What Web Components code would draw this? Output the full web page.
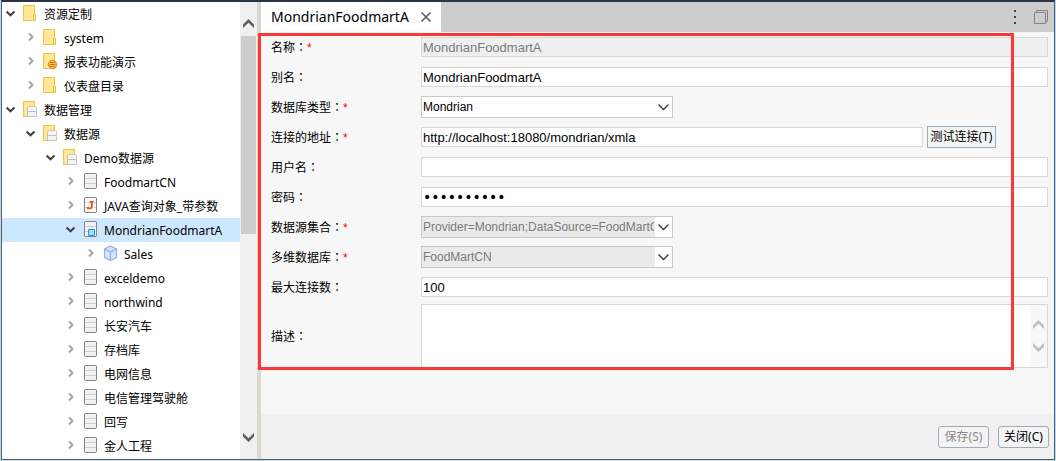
<!DOCTYPE html>
<html lang="zh-CN">
<head>
<meta charset="utf-8">
<title>MondrianFoodmartA</title>
<style>
  html { height: 100%; }
  body {
    margin: 0; height: 100%; box-sizing: border-box; padding: 0 1px 1px;
    background: #c3d7e0; color: #000;
    font: 12px/24px "Noto Sans", "Noto Sans CJK SC", sans-serif;
  }
</style>
</head>
<body>
<app-window>
  <tree-view slot="nav">
    <tree-item level="0" icon="folder" open>资源定制</tree-item>
    <tree-item level="1" icon="folder">system</tree-item>
    <tree-item level="1" icon="report">报表功能演示</tree-item>
    <tree-item level="1" icon="folder">仪表盘目录</tree-item>
    <tree-item level="0" icon="dbfolder" open>数据管理</tree-item>
    <tree-item level="1" icon="dbfolder" open>数据源</tree-item>
    <tree-item level="2" icon="dbfolder" open>Demo数据源</tree-item>
    <tree-item level="3" icon="db">FoodmartCN</tree-item>
    <tree-item level="3" icon="java">JAVA查询对象_带参数</tree-item>
    <tree-item level="3" icon="olap" open selected>MondrianFoodmartA</tree-item>
    <tree-item level="4" icon="cube">Sales</tree-item>
    <tree-item level="3" icon="db">exceldemo</tree-item>
    <tree-item level="3" icon="db">northwind</tree-item>
    <tree-item level="3" icon="db">长安汽车</tree-item>
    <tree-item level="3" icon="db">存档库</tree-item>
    <tree-item level="3" icon="db">电网信息</tree-item>
    <tree-item level="3" icon="db">电信管理驾驶舱</tree-item>
    <tree-item level="3" icon="db">回写</tree-item>
    <tree-item level="3" icon="db">金人工程</tree-item>
  </tree-view>
  <tab-bar slot="tabs">MondrianFoodmartA</tab-bar>
  <source-form slot="main">
    <form-field label="名称" required disabled value="MondrianFoodmartA"></form-field>
    <form-field label="别名" value="MondrianFoodmartA"></form-field>
    <form-field label="数据库类型" required kind="select" value="Mondrian"></form-field>
    <form-field label="连接的地址" required value="http://localhost:18080/mondrian/xmla" class="short"><ui-button square>测试连接(T)</ui-button></form-field>
    <form-field label="用户名" value=""></form-field>
    <form-field label="密码" kind="password" value="mondrian18"></form-field>
    <form-field label="数据源集合" required disabled kind="select" value="Provider=Mondrian;DataSource=FoodMartCN"></form-field>
    <form-field label="多维数据库" required disabled kind="select" value="FoodMartCN"></form-field>
    <form-field label="最大连接数" value="100"></form-field>
    <form-field label="描述" kind="textarea" value=""></form-field>
  </source-form>
  <action-bar slot="actions">
    <ui-button disabled>保存(S)</ui-button>
    <ui-button>关闭(C)</ui-button>
  </action-bar>
</app-window>

<script>
class Base extends HTMLElement {
  connectedCallback() {
    if (this.shadowRoot) return;
    this.attachShadow({ mode: 'open' }).innerHTML = this.render();
  }
}

customElements.define('app-window', class extends Base {
  render() {
    return `<style>
      :host { display: grid; grid-template-columns: 259px minmax(0, 1fr); height: 100%; box-sizing: border-box;
        border: solid #53616f; border-width: 2px 1px 1px; border-top-color: #2a3549; border-right-color: #4a5d80; overflow: hidden; }
      nav { min-height: 0; border-right: 4px solid #dbd8d1; overflow: hidden; }
      section { display: flex; flex-direction: column; min-height: 0; background: #f7f7f7; }
      main { flex: 1; min-height: 0; }
    </style>
    <nav><slot name="nav"></slot></nav>
    <section><slot name="tabs"></slot><main><slot name="main"></slot></main><slot name="actions"></slot></section>`;
  }
});

customElements.define('tree-view', class extends Base {
  render() {
    return `<style>
      :host { display: grid; grid-template-columns: minmax(0, 1fr) 17px; height: 100%; background: #fff; }
      .items { min-height: 0; overflow: hidden; }
      .bar { display: flex; flex-direction: column; background: #f0f0f0; }
      button { box-sizing: border-box; border: 0; padding: 8px 0; background: none; height: 34px; display: flex; justify-content: center; align-items: flex-start; }
      .up { align-items: flex-end; }
      .track { flex: 1; padding: 0 1px; }
      .thumb { height: 51%; background: #cdcdcd; }
      svg { display: block; fill: #606060; }
    </style>
    <div class="items" role="tree"><slot></slot></div>
    <div class="bar">
      <button class="up" aria-label="向上滚动"><svg width="11" height="9" viewBox="0 0 11 9"><path d="M5.500 0L11 5.500V9L5.500 3.800 0 9V5.500z"/></svg></button>
      <div class="track"><div class="thumb"></div></div>
      <button aria-label="向下滚动"><svg width="11" height="9" viewBox="0 0 11 9"><path d="M5.500 9L11 3.500V0L5.500 5.200 0 0V3.500z"/></svg></button>
    </div>`;
  }
});

const folder = `<path fill="#ffe795" stroke="#e8c548" d="M.5.500H11.500V9.500H12.500V15.500H.5z"/><path fill="#ffe795" stroke="#e8c548" d="M10.500 9.500h2v5.500h-2z"/>`;
const cabinet = `<path fill="#f2f2f2" stroke="#858585" d="M2 .500H13L13.500 1V15L13 15.500H2L1.500 15V1z"/><path stroke="#cfcfcf" d="M2 5.500h11M2 10.500h11"/>`;
const ICONS = {
  folder,
  report: folder + `<circle cx="9.500" cy="11.500" r="4.200" fill="#fbbd5c" stroke="#e08a1e"/><path stroke="#d07c16" d="M7 9.500h5M6.500 11.500h6M7 13.500h5"/>`,
  dbfolder: `<path fill="#ffe795" stroke="#e8c548" d="M.5.500H11.500V15.500H.5z"/><path fill="#f4f4f4" stroke="#c4c4c4" d="M6 5.500H12.500L13.500 6.500V15.500H4.500V7z"/><path stroke="#c4c4c4" d="M5 10.500h8"/>`,
  db: cabinet,
  java: `<path fill="#fafafa" stroke="#858585" d="M2 .500H13L13.500 1V15L13 15.500H2L1.500 15V1z"/><path stroke="#cfcfcf" d="M2 5.500h2M11 5.500H13M2 10.500h2M11 10.500H13"/><path fill="none" stroke="#e8590c" stroke-width="1.800" d="M6.500 5h4M8.900 5v4.500Q8.900 11.300 7 11.300H5V9.800"/>`,
  olap: cabinet + `<path fill="#a5dcfb" stroke="#1c9ceb" d="M5.500 8.500h6v6h-6z"/>`,
  cube: `<path fill="#d5e3f8" stroke="#8bb0ea" stroke-width="1.200" d="M7.500 1L13.500 4V12.500L7.500 15.500 1.500 12.500V4z"/><path fill="none" stroke="#8bb0ea" stroke-width="1.200" d="M1.500 4L7.500 7 13.500 4M7.500 7V15"/>`
};

customElements.define('tree-item', class extends Base {
  render() {
    const open = this.hasAttribute('open');
    this.setAttribute('role', 'treeitem');
    return `<style>
      :host { display: flex; align-items: center; gap: 6px; height: 24px; white-space: nowrap;
        padding-left: calc(3px + 20px * var(--level)); --level: ${this.getAttribute('level')}; }
      :host([selected]) { background: #cde7ff; }
      svg { flex: none; fill: none; }
      .icon { width: 15px; }
      span { padding-top: 2px; }
    </style>
    <svg width="12" height="18" viewBox="0 0 12 18">${open
      ? '<path stroke="#404040" stroke-width="2" d="M1.500 6.500L5.500 10.300 9.500 6.500"/>'
      : '<path stroke="#a6a6a6" stroke-width="2" d="M4 4.500L7.500 8 4 11.500"/>'}</svg>
    <svg class="icon" width="15" height="18" viewBox="0 0 15 18">${ICONS[this.getAttribute('icon')]}</svg>
    <span><slot></slot></span>`;
  }
});

customElements.define('tab-bar', class extends Base {
  render() {
    return `<style>
      :host { display: flex; justify-content: space-between; flex: none; height: 30px; background: #ccc; }
      .tab { display: flex; align-items: center; gap: 12px; padding: 0 10px; background: #fff; font-size: 14px; }
      .tools { display: flex; align-items: center; gap: 17px; padding-right: 6px; }
      button { border: 0; padding: 0; background: none; display: block; }
      svg { display: block; fill: none; }
    </style>
    <div class="tab" role="tab"><span><slot></slot></span>
      <button aria-label="关闭标签"><svg width="10" height="10" viewBox="0 0 10 10"><path stroke="#55585c" stroke-width="1.500" d="M.5.500l9 9M9.500.500l-9 9"/></svg></button></div>
    <div class="tools">
      <button aria-label="更多"><svg width="4" height="14" viewBox="0 0 4 14"><path fill="#444" d="M1 0h2v2H1zM1 6h2v2H1zM1 12h2v2H1z"/></svg></button>
      <button aria-label="最大化"><svg width="14" height="14" viewBox="0 0 14 14"><path stroke="#858585" d="M.5 2.500h11v11H.5zM2.500 2V.500h11v11H12"/></svg></button>
    </div>`;
  }
});

customElements.define('source-form', class extends Base {
  render() {
    return `<style>
      :host { display: block; position: relative; padding: 0 6px 0 10px; }
      .mark { position: absolute; inset: 1px 40px 0 -3px; border: 3px solid #ff3636; pointer-events: none; }
    </style>
    <slot></slot><div class="mark"></div>`;
  }
});

customElements.define('form-field', class extends Base {
  render() {
    const kind = this.getAttribute('kind') || 'text';
    const value = this.getAttribute('value');
    const dis = this.hasAttribute('disabled') ? 'disabled' : '';
    let control;
    if (kind === 'select') {
      control = `<span class="combo"><select id="c" ${dis}><option>${value}</option></select>
        <svg width="17" height="20" viewBox="0 0 17 20"><path d="M3.500 7.500L8.500 12.500 13.500 7.500"/></svg></span>`;
    } else if (kind === 'textarea') {
      control = `<span class="area"><textarea id="c"></textarea><span class="bar">
        <svg width="11" height="9" viewBox="0 0 11 9"><path d="M5.500 0L11 5.500V9L5.500 3.800 0 9V5.500z"/></svg>
        <svg width="11" height="9" viewBox="0 0 11 9"><path d="M5.500 9L11 3.500V0L5.500 5.200 0 0V3.500z"/></svg></span></span>`;
    } else {
      control = `<input id="c" type="${kind}" value="${value}" ${dis}>`;
    }
    return `<style>
      :host { display: grid; grid-template-columns: 150px minmax(0, 1fr); align-items: center; height: 30px; }
      :host([kind=textarea]) { height: 68px; }
      :host(.short) .ctl { padding-right: 52px; }
      .colon { font-family: "Noto Sans CJK TC", sans-serif; }
      .req { color: #f00; font-family: "Liberation Sans", sans-serif; }
      .ctl { display: flex; align-items: center; gap: 4px; }
      input, select, textarea { box-sizing: border-box; margin: 0; border: 1px solid #d9d7d2; border-radius: 0; outline: 0;
        background: #fff; color: #000; font: 13px/16px "Liberation Sans", sans-serif; }
      input { flex: 1; min-width: 0; width: 100%; height: 20px; padding: 0 1px; }
      input[type=password] { font-family: "DejaVu Sans", sans-serif; font-size: 14px; }
      input:disabled { background: #efefef; color: #7b7b7b; }
      .combo { display: grid; width: 252px; height: 22px; grid-template-columns: minmax(0, 1fr) 18px; align-items: center; }
      select { grid-area: 1 / 1 / 2 / 3; width: 100%; height: 22px; appearance: none; padding: 0 18px 0 1px; font-size: 12px; border-color: #cbc9c4; opacity: 1; }
      select:disabled { background: #eaeaea; color: #7b7b7b; opacity: 1; }
      .combo svg { grid-area: 1 / 2; background: #fff; fill: none; stroke: #333; stroke-width: 1.300; pointer-events: none; z-index: 1; }
      .area { display: flex; flex: 1; box-sizing: border-box; height: 64px; border: 1px solid #d9d7d2; background: #fff; }
      textarea { flex: 1; border: 0; padding: 1px; resize: none; }
      .bar { display: flex; flex-direction: column; align-items: center; justify-content: center; gap: 14px; width: 17px; background: #f8f8f8; }
      .bar svg { fill: #bfbfbf; }
    </style>
    <label for="c">${this.getAttribute('label')}<span class="colon" lang="zh-TW">：</span>${this.hasAttribute('required') ? '<span class="req">*</span>' : ''}</label>
    <div class="ctl">${control}<slot></slot></div>`;
  }
});

customElements.define('action-bar', class extends Base {
  render() {
    return `<style>
      :host { display: flex; flex: none; justify-content: flex-end; align-items: center; gap: 9px; height: 45px; padding-right: 5px; background: #f1f1f1; }
    </style><slot></slot>`;
  }
});

customElements.define('ui-button', class extends Base {
  render() {
    return `<style>
      :host { display: block; flex: none; }
      button { display: block; box-sizing: border-box; height: 22px; min-width: 51px; margin: 0; padding: 0 5px; border: 1px solid #9badba; border-radius: 3px;
        background: #f4f4f4; color: #000; font: inherit; line-height: 20px; white-space: nowrap; }
      :host([square]) button { border-radius: 0; padding: 0 2px; min-width: 69px; }
      button:disabled { color: #8a8a8a; }
    </style><button type="button" ${this.hasAttribute('disabled') ? 'disabled' : ''}><slot></slot></button>`;
  }
});
</script>
</body>
</html>
